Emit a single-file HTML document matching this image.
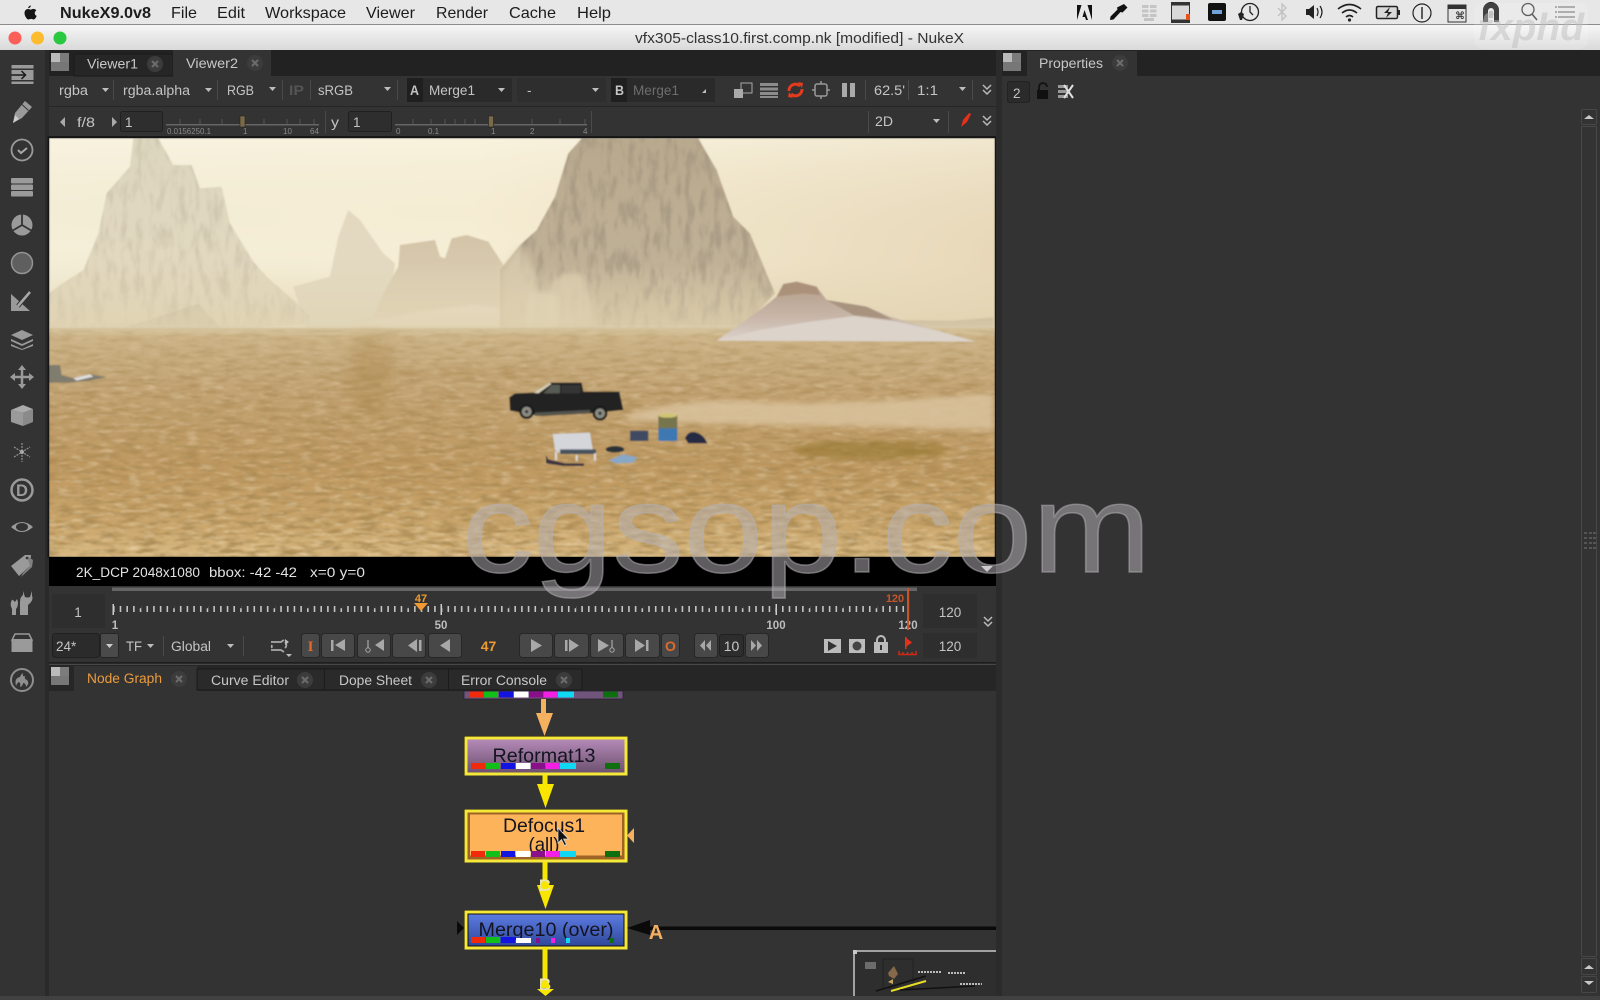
<!DOCTYPE html>
<html><head><meta charset="utf-8"><title>NukeX</title>
<style>
html,body{margin:0;padding:0;background:#333;width:1600px;height:1000px;overflow:hidden}
svg{display:block;position:absolute;left:0;top:0;filter:blur(.35px)}
text{font-family:"Liberation Sans",sans-serif;white-space:pre}
.m{font-size:16px;fill:#1c1c1c}
.u{font-size:13.5px;fill:#c4c4c4}
.d{fill:#6d6d6d}
.s{font-size:8px;fill:#8a8a8a}
.n{font-size:19.5px;fill:#141420;text-anchor:middle}
.tab{font-size:13.5px;fill:#c8c8c8}
.sep{fill:#4a4a4a}
.ic{fill:#9a9a9a}
.icl{fill:none;stroke:#9a9a9a}
.b{fill:#484848;stroke:#272727}
.f{fill:#2e2e2e}
.ar{fill:#bdbdbd}
</style></head><body>
<svg width="1600" height="1000" viewBox="0 0 1600 1000" xmlns="http://www.w3.org/2000/svg">
<defs>
<linearGradient id="sky" x1="0" y1="0" x2="1" y2="0"><stop offset="0" stop-color="#f5efda"/><stop offset=".45" stop-color="#f6eed6"/><stop offset=".75" stop-color="#eee2c6"/><stop offset="1" stop-color="#e7d8b9"/></linearGradient>
<linearGradient id="skyv" x1="0" y1="0" x2="0" y2="1"><stop offset="0" stop-color="#fbf6e6" stop-opacity=".5"/><stop offset=".55" stop-color="#e9dcb9" stop-opacity=".05"/><stop offset="1" stop-color="#e0d2ae" stop-opacity=".3"/></linearGradient>
<linearGradient id="gnd" x1="0" y1="0" x2="0" y2="1"><stop offset="0" stop-color="#cfb88c"/><stop offset=".12" stop-color="#c8ad80"/><stop offset=".3" stop-color="#c2a271"/><stop offset=".6" stop-color="#be9860"/><stop offset=".85" stop-color="#c8a46a"/><stop offset="1" stop-color="#d8b880"/></linearGradient>
<linearGradient id="mt1" x1="0" y1="0" x2="0" y2="1"><stop offset="0" stop-color="#ddd6be"/><stop offset=".6" stop-color="#e1d8bf"/><stop offset="1" stop-color="#e0d4b7"/></linearGradient>
<linearGradient id="mt2" x1="0" y1="0" x2="0" y2="1"><stop offset="0" stop-color="#b8a98e"/><stop offset=".6" stop-color="#bfb096"/><stop offset="1" stop-color="#cdbc9b"/></linearGradient>
<linearGradient id="mesa" x1="0" y1="0" x2="0" y2="1"><stop offset="0" stop-color="#d3c4a8"/><stop offset="1" stop-color="#e2d5b8"/></linearGradient>
<linearGradient id="mound" x1="0" y1="0" x2="0" y2="1"><stop offset="0" stop-color="#b49c88"/><stop offset=".6" stop-color="#c8b6a8"/><stop offset="1" stop-color="#ddd3cb"/></linearGradient>
<linearGradient id="haze" x1="0" y1="0" x2="0" y2="1"><stop offset="0" stop-color="#e2d6b6" stop-opacity="0"/><stop offset="1" stop-color="#e0d2b0" stop-opacity=".75"/></linearGradient>
<linearGradient id="fade" x1="0" y1="0" x2="0" y2="1"><stop offset="0" stop-color="#fff" stop-opacity=".25"/><stop offset=".25" stop-color="#fff" stop-opacity=".65"/><stop offset="1" stop-color="#fff"/></linearGradient>
<mask id="gm"><rect x="49" y="330" width="946" height="227" fill="url(#fade)"/></mask>
<filter id="gr" x="0" y="0" width="1" height="1"><feTurbulence type="fractalNoise" baseFrequency=".05 .24" numOctaves="4" seed="5"/><feColorMatrix values="0 0 0 0 .38  0 0 0 0 .24  0 0 0 0 .08  3 0 0 0 -1.25"/></filter>
<filter id="gl" x="0" y="0" width="1" height="1"><feTurbulence type="fractalNoise" baseFrequency=".07 .3" numOctaves="3" seed="9"/><feColorMatrix values="0 0 0 0 .95  0 0 0 0 .85  0 0 0 0 .65  3 0 0 0 -1.5"/></filter>
<filter id="rk" x="0" y="0" width="1" height="1"><feTurbulence type="fractalNoise" baseFrequency=".14 .04" numOctaves="4" seed="2"/><feColorMatrix values="0 0 0 0 .3  0 0 0 0 .25  0 0 0 0 .18  3 0 0 0 -1.35"/></filter>
<filter id="b1"><feGaussianBlur stdDeviation="1"/></filter>
<filter id="b4"><feGaussianBlur stdDeviation="4"/></filter>
<filter id="b8"><feGaussianBlur stdDeviation="8"/></filter>
<filter id="b12" x="-30%" y="-30%" width="160%" height="160%"><feGaussianBlur stdDeviation="12"/></filter>
<filter id="soft" x="0" y="0" width="1" height="1"><feGaussianBlur stdDeviation=".7"/></filter>
<clipPath id="vc"><rect x="49" y="138" width="946" height="419"/></clipPath>
<clipPath id="m1c"><path id="m1p" transform="translate(40 130) scale(.3333)" d="M27 490L60 465 130 420 175 310 200 190 270 110 280 25 355 25 400 105 455 105 480 175 545 170 570 280 640 395 680 440 760 510 835 580 540 595 220 600 27 590Z"/></clipPath>
<clipPath id="m2c"><path transform="translate(520 130) scale(.3333)" d="M0 345L50 300 105 200 145 70 185 25 535 25 590 120 640 260 690 310 765 490 700 560 640 600 250 600 200 590 0 600Z"/></clipPath>
<linearGradient id="ref" x1="0" y1="0" x2="0" y2="1"><stop offset="0" stop-color="#b78cba"/><stop offset="1" stop-color="#6a4f6e"/></linearGradient>
<linearGradient id="mrg" x1="0" y1="0" x2="0" y2="1"><stop offset="0" stop-color="#5f7fe6"/><stop offset="1" stop-color="#2c4596"/></linearGradient>
<linearGradient id="tb" x1="0" y1="0" x2="0" y2="1"><stop offset="0" stop-color="#f6f6f6"/><stop offset="1" stop-color="#d9d9d9"/></linearGradient>
<g id="panel"><rect width="18" height="18" fill="#555"/><rect width="9" height="9" fill="#bbb"/><rect x="9" width="9" height="9" fill="#7c7c7c"/><rect y="9" width="18" height="9" fill="#777"/></g>
<g id="xc"><circle r="8" fill="#3c3c3c"/><path d="M-3-3L3 3M3-3L-3 3" stroke="#6c6c6c" stroke-width="2"/></g>
<g id="chips"><rect x="0" width="14" height="6" fill="#f22a0c"/><rect x="15" width="14" height="6" fill="#10c018"/><rect x="30" width="14" height="6" fill="#1414e0"/><rect x="45" width="14.500" height="6" fill="#fff"/><rect x="60" width="14" height="6" fill="#8a0f8a"/><rect x="75" width="14" height="6" fill="#f41fe4"/><rect x="89" width="16" height="6" fill="#0fd8f2"/><rect x="134" width="15" height="6" fill="#0d6f0d"/></g>
<g id="chev"><path d="M-4-6L0-2 4-6M-4-1L0 3 4-1" fill="none" stroke="#bbb" stroke-width="1.500"/></g>
</defs>

<!-- base -->
<rect width="1600" height="1000" fill="#333"/>

<!-- menu bar -->
<rect width="1600" height="24" fill="#e7e7e7"/>
<rect y="24" width="1600" height="1" fill="#8c8c8c"/>
<path d="M31 5.500c-.4 1.700-1.500 2.700-2.800 2.700-.1-1.500 1.300-2.600 2.800-2.700zM24.500 13c0-2.500 1.700-4 3.600-4 1 0 1.800.6 2.500.6.700 0 1.600-.7 2.800-.7 1.200 0 2.200.6 2.900 1.600-2.300 1.300-1.900 4.600.4 5.400-.6 1.600-1.800 3.600-3.100 3.600-.9 0-1.300-.6-2.500-.6s-1.700.6-2.600.6c-1.800 0-4-3.700-4-6.500z" fill="#151515"/>
<text x="60" y="18" class="m" font-weight="bold" textLength="91" lengthAdjust="spacingAndGlyphs">NukeX9.0v8</text>
<text x="171" y="18" class="m" textLength="26" lengthAdjust="spacingAndGlyphs">File</text>
<text x="217" y="18" class="m" textLength="28" lengthAdjust="spacingAndGlyphs">Edit</text>
<text x="265" y="18" class="m" textLength="81" lengthAdjust="spacingAndGlyphs">Workspace</text>
<text x="366" y="18" class="m" textLength="49" lengthAdjust="spacingAndGlyphs">Viewer</text>
<text x="436" y="18" class="m" textLength="52" lengthAdjust="spacingAndGlyphs">Render</text>
<text x="509" y="18" class="m" textLength="47" lengthAdjust="spacingAndGlyphs">Cache</text>
<text x="577" y="18" class="m" textLength="34" lengthAdjust="spacingAndGlyphs">Help</text>

<!-- status icons -->
<path d="M1077 5h4.500l-4.500 15zM1092 5h-4.500l4.500 15zM1084.500 10l3.500 10h-2l-1-3h-2.500z" fill="#111"/>
<path d="M1124 4l3.500 3.500-5 5-2-.5-7 7.500-3.500 .5 .5-3.500 7-7-.5-2z" fill="#111"/>
<g fill="#c4c4c4"><rect x="1142" y="5" width="6.500" height="3"/><rect x="1150" y="5" width="6.500" height="3"/><rect x="1142" y="9.500" width="6.500" height="3"/><rect x="1150" y="9.500" width="6.500" height="3"/><rect x="1142" y="14" width="6.500" height="3"/><rect x="1150" y="14" width="6.500" height="3"/><rect x="1144" y="18" width="10" height="3"/></g>
<rect x="1171" y="2" width="19" height="21" fill="#333"/><rect x="1172" y="5.500" width="17" height="14" fill="#d8d8d8"/><rect x="1186" y="14" width="4" height="6" fill="#e8501a"/>
<rect x="1208" y="3" width="18" height="18" rx="2" fill="#111"/><rect x="1212" y="10" width="10" height="4" fill="#6fa3d8"/>
<circle cx="1250" cy="12" r="8.500" fill="none" stroke="#222" stroke-width="1.300"/><path d="M1250 6v6l3 3" fill="none" stroke="#222" stroke-width="1.300"/><path d="M1238 14l3-2 3 2-2 6h-2z" fill="#222"/>
<path d="M1278 8l8 8-4 4V4l4 4-8 8" fill="none" stroke="#c0c0c0" stroke-width="1.300"/>
<path d="M1306 9h3l5-4v14l-5-4h-3z" fill="#222"/><path d="M1317 8q2 4 0 8M1320 6q4 6 0 12" fill="none" stroke="#222" stroke-width="1.200"/>
<path d="M1338 9q11.500-9 23 0M1342 13q7.500-6 15 0M1346 17q3.500-3 7 0" fill="none" stroke="#222" stroke-width="1.600"/><circle cx="1349.500" cy="20" r="1.600" fill="#222"/>
<rect x="1376.500" y="6.500" width="21" height="12" rx="1.500" fill="#d8d8d8" stroke="#222" stroke-width="1.500"/><rect x="1398" y="10" width="2" height="5" fill="#222"/><path d="M1390 7l-6 6h4l-2 5 6-6h-4z" fill="#222"/>
<circle cx="1422" cy="13" r="9" fill="none" stroke="#222" stroke-width="1.200"/><rect x="1421.300" y="7" width="1.400" height="12" fill="#222"/>
<rect x="1448" y="5" width="18" height="17" fill="#e4e4e4" stroke="#333"/><rect x="1448" y="5" width="18" height="4" fill="#333"/><text x="1455" y="19" font-size="10" fill="#111">⌘</text>
<path d="M1483 22V10a8 8 0 0 1 16 0v12h-5V11a3 3 0 0 0-6 0v11z" fill="#222"/><rect x="1489" y="11" width="4" height="7" fill="#bbb"/>
<circle cx="1528" cy="9.500" r="6" fill="none" stroke="#444" stroke-width="1.300"/><path d="M1532 14l5 6" stroke="#444" stroke-width="1.500"/>
<path d="M1555 7h20M1555 12h20M1555 17h20" stroke="#777" stroke-width="1.300" stroke-dasharray="2 1 17"/>

<!-- title bar -->
<rect y="25" width="1600" height="25" fill="url(#tb)"/>
<circle cx="15" cy="38" r="6.500" fill="#fc5f57"/><circle cx="37.500" cy="38" r="6.500" fill="#fdbc2e"/><circle cx="60" cy="38" r="6.500" fill="#28c83f"/>
<text x="635" y="43" font-size="14.500" fill="#333" textLength="329" lengthAdjust="spacingAndGlyphs">vfx305-class10.first.comp.nk [modified] - NukeX</text>

<!-- left toolbar divider -->
<rect x="45" y="50" width="4" height="950" fill="#2a2a2a"/>

<!-- viewer tab bar -->
<rect x="49" y="50" width="947" height="26" fill="#222"/>
<use href="#panel" x="51" y="53"/>
<rect x="74" y="54" width="99" height="22" fill="#262626" stroke="#1a1a1a"/>
<rect x="173" y="50" width="98" height="27" fill="#333"/>
<text x="87" y="68.500" class="tab" textLength="51" lengthAdjust="spacingAndGlyphs">Viewer1</text><use href="#xc" x="155" y="64"/>
<text x="186" y="68" class="tab" textLength="52" lengthAdjust="spacingAndGlyphs">Viewer2</text><use href="#xc" x="255" y="63"/>

<!-- viewer row 1 -->
<rect x="49" y="106" width="947" height="1" fill="#262626"/>
<rect x="407" y="78" width="105" height="24" fill="#2a2a2a"/><rect x="407" y="78" width="16" height="24" fill="#1f1f1f"/>
<rect x="517" y="78" width="89" height="24" fill="#2e2e2e"/>
<rect x="611" y="78" width="104" height="24" fill="#2a2a2a"/><rect x="611" y="78" width="16" height="24" fill="#1f1f1f"/>
<text x="59" y="95" class="u" textLength="29" lengthAdjust="spacingAndGlyphs">rgba</text>
<text x="123" y="95" class="u" textLength="67" lengthAdjust="spacingAndGlyphs">rgba.alpha</text>
<text x="227" y="95" class="u" textLength="27" lengthAdjust="spacingAndGlyphs">RGB</text>
<text x="289" y="95" class="u" style="fill:#555" font-weight="bold" textLength="15" lengthAdjust="spacingAndGlyphs">IP</text>
<text x="318" y="95" class="u" textLength="35" lengthAdjust="spacingAndGlyphs">sRGB</text>
<text x="410" y="95" class="u" font-weight="bold" textLength="9" lengthAdjust="spacingAndGlyphs">A</text>
<text x="429" y="95" class="u" textLength="46" lengthAdjust="spacingAndGlyphs">Merge1</text>
<text x="527" y="95" class="u">-</text>
<text x="615" y="95" class="u" font-weight="bold" textLength="9" lengthAdjust="spacingAndGlyphs">B</text>
<text x="633" y="95" class="u d" style="fill:#6d6d6d" textLength="46" lengthAdjust="spacingAndGlyphs">Merge1</text>
<g class="ar"><path d="M102 88h7l-3.500 4zM205 88h7l-3.500 4zM269 87h7l-3.500 4zM384 87h7l-3.500 4zM498 88h7l-3.500 4zM592 88h7l-3.500 4zM702 93l4-4v4zM959 87h7l-3.500 4zM933 119h7l-3.500 4z"/></g>
<g class="sep"><rect x="113" y="80" width="1" height="20"/><rect x="217" y="80" width="1" height="20"/><rect x="282" y="80" width="1" height="20"/><rect x="310" y="80" width="1" height="20"/><rect x="397" y="80" width="1" height="20"/><rect x="865" y="80" width="1" height="20"/><rect x="908" y="80" width="1" height="20"/><rect x="972" y="80" width="1" height="20"/></g>
<!-- row1 icons -->
<rect x="741" y="83" width="11" height="10" fill="#333" stroke="#aaa"/><rect x="734" y="89" width="9" height="9" fill="#aaa"/>
<rect x="760" y="83" width="18" height="3" fill="#8c8c8c"/><rect x="760" y="87.500" width="18" height="3" fill="#8c8c8c"/><rect x="760" y="92" width="18" height="3" fill="#8c8c8c"/><rect x="760" y="96" width="18" height="2" fill="#8c8c8c"/>
<path d="M789 91a6.500 6.500 0 0 1 11-5M802 89a6.500 6.500 0 0 1-11 5" fill="none" stroke="#e63a1e" stroke-width="3"/><path d="M798 82l5 1-1 5zM793 98l-5-1 1-5z" fill="#e63a1e"/>
<rect x="815" y="84" width="12" height="12" rx="2" fill="none" stroke="#999" stroke-width="1.500"/><path d="M821 81v3M821 96v3M812 90h3M827 90h3" stroke="#999" stroke-width="1.500"/>
<rect x="842" y="83" width="5" height="14" fill="#aaa"/><rect x="850" y="83" width="5" height="14" fill="#aaa"/>
<text x="874" y="95" class="u" textLength="31" lengthAdjust="spacingAndGlyphs">62.5'</text>
<text x="917" y="95" class="u" textLength="21" lengthAdjust="spacingAndGlyphs">1:1</text>
<use href="#chev" x="987" y="91"/>

<!-- viewer row 2 -->
<rect x="49" y="136" width="947" height="2" fill="#1a1a1a"/>
<path d="M65 117v10l-5-5zM112 117v10l5-5z" fill="#aaa"/>
<text x="77" y="127" class="u" textLength="18" lengthAdjust="spacingAndGlyphs">f/8</text>
<rect x="120.500" y="111.500" width="42" height="20" rx="2" fill="#2e2e2e" stroke="#202020"/><text x="125" y="127" class="u">1</text>
<rect x="166" y="124" width="153" height="1.500" fill="#666"/>
<path d="M180 119v5M200 119v5M222 119v5M264 119v5M287 119v5M300 119v5M314 119v5" stroke="#555"/>
<rect x="240" y="116" width="5" height="11" fill="#7b6a48" stroke="#222" stroke-width=".6"/>
<text x="167" y="134" class="s" textLength="44" lengthAdjust="spacingAndGlyphs">0.0156250.1</text><text x="243" y="134" class="s">1</text><text x="283" y="134" class="s">10</text><text x="310" y="134" class="s">64</text>
<rect x="325" y="111" width="1" height="22" class="sep"/>
<text x="331" y="127" class="u" textLength="8" lengthAdjust="spacingAndGlyphs">y</text>
<rect x="348.500" y="111.500" width="43" height="20" rx="2" fill="#2e2e2e" stroke="#202020"/><text x="353" y="127" class="u">1</text>
<rect x="395" y="124" width="192" height="1.500" fill="#666"/>
<path d="M413 119v5M431 119v5M445 119v5M455 119v5M465 119v5M475 119v5M532 119v5M560 119v5M585 119v5" stroke="#555"/>
<rect x="488.500" y="116" width="5" height="11" fill="#7b6a48" stroke="#222" stroke-width=".6"/>
<text x="396" y="134" class="s">0</text><text x="428" y="134" class="s">0.1</text><text x="491" y="134" class="s">1</text><text x="530" y="134" class="s">2</text><text x="583" y="134" class="s">4</text>
<rect x="591" y="111" width="1" height="22" class="sep"/>
<rect x="868" y="111" width="1" height="22" class="sep"/><rect x="948" y="111" width="1" height="22" class="sep"/>
<text x="875" y="126" class="u" textLength="18" lengthAdjust="spacingAndGlyphs">2D</text>
<path d="M961 127l2-7 6-7 2 1-4 8z" fill="#e6301a"/>
<use href="#chev" x="987" y="122"/>

<!-- LANDSCAPE -->
<rect x="47.500" y="136.500" width="949" height="421" fill="#161616"/>
<g clip-path="url(#vc)"><g filter="url(#soft)">
<rect x="49" y="138" width="946" height="195" fill="url(#sky)"/>
<rect x="49" y="138" width="946" height="195" fill="url(#skyv)"/>
<g transform="translate(40 130) scale(.3333)">
<path d="M27 490L60 465 130 420 175 310 200 190 270 110 280 25 355 25 400 105 455 105 480 175 545 170 570 280 640 395 680 440 760 510 835 580 540 600 220 610 27 600Z" fill="url(#mt1)"/>
<path d="M760 470L870 440 895 320 925 240 960 270 1030 370 1065 400 1050 500 1040 600 800 600Z" fill="#e2d9c0"/>
<path d="M1030 490L1075 410 1080 345 1185 330 1200 380 1215 385 1235 325 1280 315 1345 335 1400 420 1440 470 1500 500 1500 610 850 610 1000 560Z" fill="url(#mesa)"/>
<path d="M1415 430L1440 350 1500 320 1500 500 1440 470Z" fill="#dcd0b4"/>
<path d="M850 605L1000 570 1070 560 1140 545 1300 525 1440 540 1500 570 1500 612 850 612Z" fill="#e6dbc2" filter="url(#b4)"/>
<path d="M230 600L340 565 450 530 475 520 510 560 550 600Z" fill="#d0c5a9"/>
</g>
<g clip-path="url(#m1c)"><rect x="49" y="138" width="260" height="200" filter="url(#rk)" opacity=".2"/></g>
<!-- main mountain -->
<g transform="translate(520 130) scale(.3333)">
<path d="M-60 420L0 345 50 300 105 200 145 70 185 25 535 25 590 120 640 260 690 310 765 490 700 560 640 600 250 605 0 605-60 600Z" fill="url(#mt2)"/>
</g>
<g clip-path="url(#m2c)"><rect x="500" y="138" width="300" height="210" filter="url(#rk)" opacity=".5"/></g>
<g transform="translate(520 130) scale(.3333)">
<path d="M-60 420L0 345 40 420 60 500 30 600-60 600Z" fill="#e2d5b6" opacity=".6" filter="url(#b12)"/>
<path d="M90 460Q120 425 175 430 205 445 215 510L225 590 60 595Z" fill="#d9cbac" opacity=".8" filter="url(#b8)"/>
<path d="M20 500Q60 475 110 495L120 590 10 595Z" fill="#e0d3b6" opacity=".8" filter="url(#b8)"/>
<path d="M-10 600L30 595 230 590 255 612-10 614Z" fill="#a89a7e" opacity=".6" filter="url(#b1)"/>
<path d="M1130 570L1300 572 1420 562 1420 600 1200 600Z" fill="#baac90"/>
</g>
<rect x="49" y="265" width="946" height="70" fill="url(#haze)"/>
<!-- ground -->
<rect x="49" y="328" width="946" height="229" fill="url(#gnd)"/>
<rect x="49" y="326" width="946" height="8" fill="#dccfae" opacity=".6" filter="url(#b4)"/>
<g mask="url(#gm)"><rect x="49" y="330" width="946" height="227" filter="url(#gr)" opacity=".85"/><rect x="49" y="330" width="946" height="227" filter="url(#gl)" opacity=".4"/></g>
<ellipse cx="370" cy="375" rx="22" ry="42" fill="#a98447" opacity=".35" filter="url(#b8)"/>
<ellipse cx="450" cy="373" rx="120" ry="5" fill="#a98447" opacity=".2" filter="url(#b4)"/>
<!-- white mound -->
<g transform="translate(520 130) scale(.3333)">
<path d="M590 632L650 590 720 540 770 500 790 462 830 455 890 470 920 510 1040 530 1110 560 1210 590 1365 634Z" fill="url(#mound)"/>
<path d="M590 632L720 600 850 578 1000 558 1130 575 1250 602 1365 635Z" fill="#dcd3cb"/>
<path d="M770 500L790 462 830 455 890 470 900 495 850 490Z" fill="#ab917a"/>
<path d="M920 510L1040 530 1120 570 1000 555Z" fill="#a8937f"/>
<!-- dust -->
<path d="M320 855Q500 800 700 815T1420 790L1420 900 1200 893 600 882 320 872Z" fill="#dac39e" opacity=".85" filter="url(#b8)"/>
<ellipse cx="1050" cy="960" rx="235" ry="28" fill="#92742a" opacity=".55" filter="url(#b8)"/>
</g>
<!-- left object -->
<g transform="translate(40 130) scale(.3333)">
<path d="M27 705H60L65 735 100 745 150 733 200 742 150 752 80 758 27 758Z" fill="#807c6e"/><path d="M100 745L150 733 160 740 110 752Z" fill="#dedede"/>
</g>
<!-- truck & props -->
<g transform="translate(480 360) scale(.3333)">
<path d="M88 112L105 100 160 98 210 68 305 68 310 95 418 95 430 150 330 160 180 168 90 152Z" fill="#232322"/>
<path d="M190 100L215 75 240 75 240 100Z" fill="#565b52"/><rect x="245" y="75" width="56" height="25" fill="#363634"/>
<path d="M160 98L210 68 214 72 175 100Z" fill="#d8d0b8"/>
<path d="M165 158L330 150 330 160 165 168Z" fill="#55554f"/>
<circle cx="140" cy="155" r="22" fill="#161616"/><circle cx="140" cy="155" r="15" fill="#8c8c84"/><circle cx="140" cy="155" r="5" fill="#333"/>
<circle cx="360" cy="160" r="22" fill="#161616"/><circle cx="360" cy="160" r="15" fill="#8c8c84"/><circle cx="360" cy="160" r="5" fill="#333"/>
<rect x="450" y="212" width="55" height="31" fill="#404a62"/>
<rect x="535" y="165" width="57" height="42" fill="#76744e"/><rect x="535" y="205" width="57" height="38" fill="#3d78b2"/><ellipse cx="563" cy="167" rx="28" ry="6" fill="#cfc570"/>
<path d="M615 235Q625 210 650 218 672 225 682 250H625Z" fill="#252b42"/>
<path d="M218 222L330 218 338 268 350 280 240 280 225 270Z" fill="#d4d6da"/><path d="M240 268L348 268 348 282 240 282Z" fill="#46525f"/>
<path d="M228 275v25M290 285v18M345 280v22" stroke="#ddd" stroke-width="6"/>
<path d="M198 285v25L250 318H312V310H255L205 298Z" fill="#3a3340"/>
<ellipse cx="405" cy="268" rx="28" ry="10" fill="#2a3038"/>
<path d="M385 302L430 283 472 292 460 308 410 310Z" fill="#88a8c8"/>
</g>
</g></g>

<!-- info bar -->
<rect x="49" y="557" width="947" height="29" fill="#000"/>
<text x="76" y="577" font-size="13.500" fill="#e2e2e2" textLength="124" lengthAdjust="spacingAndGlyphs">2K_DCP 2048x1080</text>
<text x="209" y="577" font-size="13.500" fill="#e2e2e2" textLength="88" lengthAdjust="spacingAndGlyphs">bbox: -42 -42</text>
<text x="310" y="577" font-size="13.500" fill="#e2e2e2" textLength="55" lengthAdjust="spacingAndGlyphs">x=0 y=0</text>
<path d="M981 566h12l-6 6z" fill="#e8e8e8"/>

<!-- timeline -->
<rect x="49" y="586" width="947" height="77" fill="#333"/>
<rect x="112" y="587.500" width="805" height="3.500" fill="#666"/>
<rect x="52" y="594" width="53" height="34" class="f"/>
<text x="78" y="617" font-size="13.500" fill="#c4c4c4" text-anchor="middle">1</text>
<line x1="113" y1="609" x2="909" y2="609" stroke="#c4c4c4" stroke-width="6" stroke-dasharray="1.600 5.090"/>
<line x1="113" y1="607" x2="909" y2="607" stroke="#333" stroke-width="2.500" stroke-dasharray="1.800 31.650" stroke-dashoffset="-26.5"/>
<rect x="112.500" y="604" width="1.500" height="11" fill="#ccc"/><rect x="440.500" y="604" width="1.500" height="11" fill="#ccc"/><rect x="775.500" y="604" width="1.500" height="11" fill="#ccc"/>
<text x="115" y="629" font-size="11.500" font-weight="bold" fill="#bdbdbd" text-anchor="middle">1</text>
<text x="441" y="629" font-size="11.500" font-weight="bold" fill="#bdbdbd" text-anchor="middle">50</text>
<text x="776" y="629" font-size="11.500" font-weight="bold" fill="#bdbdbd" text-anchor="middle">100</text>
<text x="908" y="629" font-size="11.500" font-weight="bold" fill="#bdbdbd" text-anchor="middle">120</text>
<text x="421" y="602" font-size="11" font-weight="bold" fill="#ef9a32" text-anchor="middle">47</text>
<path d="M414 603h14l-7 8z" fill="#ef9a32"/>
<text x="895" y="602" font-size="11" font-weight="bold" fill="#c8552a" text-anchor="middle">120</text>
<rect x="907" y="588" width="2.200" height="42" fill="#c8552a"/>
<rect x="923" y="594" width="54" height="34" class="f"/>
<text x="950" y="617" font-size="13.500" fill="#c4c4c4" text-anchor="middle">120</text>
<use href="#chev" x="988" y="623"/>

<!-- transport -->
<rect x="52.500" y="633.500" width="47" height="24" rx="3" fill="#2b2b2b" stroke="#202020"/>
<rect x="100.500" y="633.500" width="18" height="24" rx="2" fill="#4a4a4a" stroke="#252525"/>
<text x="56" y="651" font-size="13.500" fill="#c4c4c4">24*</text><path d="M106 644h7l-3.500 4z" fill="#ccc"/>
<text x="126" y="651" class="u" textLength="16" lengthAdjust="spacingAndGlyphs">TF</text><path d="M147 644h7l-3.500 4z" class="ar"/>
<rect x="163" y="636" width="1" height="20" class="sep"/>
<text x="171" y="651" class="u" textLength="40" lengthAdjust="spacingAndGlyphs">Global</text><path d="M227 644h7l-3.500 4z" class="ar"/>
<rect x="243" y="636" width="1" height="20" class="sep"/>
<path d="M271 642h10l3-2M271 650h10l3 2M272 645a4 4 0 0 0 0 3M285 642a4 4 0 0 1 0 6" fill="none" stroke="#a8a8a8" stroke-width="1.800"/><path d="M285 639l4 3-4 3zM286 654h6l-3 3z" fill="#bbb"/>
<g class="b">
<rect x="301.500" y="633.500" width="18" height="24" rx="3"/><rect x="321.500" y="633.500" width="33" height="24" rx="3"/><rect x="357.500" y="633.500" width="33" height="24" rx="3"/><rect x="392.500" y="633.500" width="33" height="24" rx="3"/><rect x="428.500" y="633.500" width="33" height="24" rx="3"/>
<rect x="519.500" y="633.500" width="33" height="24" rx="3"/><rect x="554.500" y="633.500" width="34" height="24" rx="3"/><rect x="590.500" y="633.500" width="33" height="24" rx="3"/><rect x="625.500" y="633.500" width="34" height="24" rx="3"/><rect x="661.500" y="633.500" width="18" height="24" rx="3"/>
<rect x="694.500" y="633.500" width="23" height="24" rx="3"/><rect x="745.500" y="633.500" width="23" height="24" rx="3"/>
</g>
<rect x="719.500" y="634.500" width="24" height="22" rx="3" fill="#2d2d2d" stroke="#202020"/>
<text x="310.500" y="651" font-size="15" font-weight="bold" fill="#e06a2a" text-anchor="middle" style="font-family:'Liberation Serif',serif">I</text>
<text x="670.500" y="651" font-size="14" font-weight="bold" fill="#e06a2a" text-anchor="middle">O</text>
<text x="488.500" y="651" font-size="14" font-weight="bold" fill="#ef9a32" text-anchor="middle">47</text>
<text x="731.500" y="651" font-size="14" fill="#c8c8c8" text-anchor="middle">10</text>
<g fill="#a8a8a8">
<rect x="331" y="640" width="2.500" height="11"/><path d="M345 639v12l-10-6z"/>
<path d="M384 639v12l-9-6z"/><circle cx="368" cy="650" r="2.200" fill="none" stroke="#a8a8a8"/><rect x="367.400" y="640" width="1.200" height="8"/>
<path d="M417 639v13l-9-6.500z"/><rect x="419" y="640" width="2.500" height="11"/>
<path d="M450 639v13l-10-6.500z"/>
<path d="M531 639v13l11-6.500z"/>
<rect x="565" y="640" width="2.500" height="11"/><path d="M569 639v13l10-6.500z"/>
<path d="M598 639v13l11-6.500z"/><circle cx="612" cy="650" r="2.200" fill="none" stroke="#a8a8a8"/><rect x="611.400" y="640" width="1.200" height="8"/>
<path d="M635 639v13l10-6.500z"/><rect x="646" y="640" width="2.500" height="11"/>
<path d="M705 640v11l-5-5.500zM711 640v11l-5-5.500z"/>
<path d="M751 640v11l5-5.500zM757 640v11l5-5.500z"/>
</g>
<rect x="824" y="639" width="17" height="14" fill="#bcbcbc"/><path d="M828 641v10l9-5z" fill="#333"/>
<rect x="849" y="639" width="16" height="14" fill="#bcbcbc"/><circle cx="857" cy="646" r="4.500" fill="#444"/>
<path d="M877 642v-2a4 4 0 0 1 8 0v2" fill="none" stroke="#bcbcbc" stroke-width="2"/><rect x="874" y="642" width="14" height="11" fill="#bcbcbc"/><rect x="880" y="645" width="2" height="5" fill="#333"/>
<path d="M905 637l7 5.500-7 5z" fill="#e6301a"/><path d="M899 651v3.500h17v-3.500M903 652v2M907.500 652v2M912 652v2" fill="none" stroke="#d02a16" stroke-width="1.500"/><rect x="905" y="637" width="1.500" height="12" fill="#e6301a"/>
<rect x="923" y="633" width="54" height="25" class="f"/>
<text x="950" y="651" font-size="13.500" fill="#c4c4c4" text-anchor="middle">120</text>

<!-- Node graph tab bar -->
<rect x="49" y="662" width="947" height="1.500" fill="#1e1e1e"/><rect x="49" y="664" width="947" height="1" fill="#484848"/>
<rect x="49" y="665" width="947" height="26" fill="#262626"/>
<use href="#panel" x="51" y="667"/>
<rect x="74" y="666" width="123" height="26" fill="#333"/>
<rect x="197" y="669" width="385" height="21" fill="#2a2a2a" stroke="#1b1b1b"/>
<rect x="324" y="669" width="1" height="21" fill="#1b1b1b"/><rect x="448" y="669" width="1" height="21" fill="#1b1b1b"/>
<text x="87" y="683" font-size="13.500" fill="#ec9c3e" textLength="75" lengthAdjust="spacingAndGlyphs">Node Graph</text><use href="#xc" x="179" y="679"/>
<text x="211" y="685" class="tab" textLength="78" lengthAdjust="spacingAndGlyphs">Curve Editor</text><use href="#xc" x="305" y="680"/>
<text x="339" y="685" class="tab" textLength="73" lengthAdjust="spacingAndGlyphs">Dope Sheet</text><use href="#xc" x="429" y="680"/>
<text x="461" y="685" class="tab" textLength="86" lengthAdjust="spacingAndGlyphs">Error Console</text><use href="#xc" x="564" y="680"/>

<!-- Node graph -->
<rect x="49" y="691" width="947" height="305" fill="#333"/>
<rect x="464" y="691" width="159" height="8" fill="#70557a" stroke="#2a2030" stroke-width=".8"/>
<use href="#chips" x="469" y="691.500"/>
<rect x="541" y="699" width="5" height="16" fill="#f5b060"/><path d="M536 713h17l-8.500 23z" fill="#f5b060"/>

<rect x="464" y="736" width="163.500" height="39.500" fill="#111"/>
<rect x="466" y="738" width="160" height="36" fill="url(#ref)" stroke="#f6e838" stroke-width="3"/>
<text x="544" y="762" class="n" textLength="103" lengthAdjust="spacingAndGlyphs">Reformat13</text>
<use href="#chips" x="471" y="763"/>
<rect x="542.500" y="775" width="5" height="10" fill="#f8e600"/><path d="M537 784h17l-8.500 24z" fill="#f8e600"/>

<rect x="464" y="809" width="163.500" height="53" fill="#111"/>
<rect x="466" y="811" width="160" height="50" fill="#9e6326" stroke="#f6e838" stroke-width="3"/>
<rect x="470" y="814.500" width="152" height="41" fill="#fdb35a"/>
<text x="544" y="832" class="n" textLength="82" lengthAdjust="spacingAndGlyphs">Defocus1</text>
<text x="544" y="851" class="n" textLength="31" lengthAdjust="spacingAndGlyphs">(all)</text>
<use href="#chips" x="471" y="851"/>
<path d="M634 828v15l-7-7.500z" fill="#f5b060"/>
<path d="M558 828v15l3.500-3.500 3 6 2-1-3-5.500h5z" fill="#111" stroke="#ddd" stroke-width=".7"/>
<rect x="542.500" y="862" width="5" height="24" fill="#f8e600"/><path d="M537 885h17l-8.500 24z" fill="#f8e600"/>
<text x="545" y="891" font-size="17" font-weight="bold" fill="#e8e4b0" text-anchor="middle">B</text>
<rect x="541" y="883" width="8" height="5" fill="#f8e600"/>

<rect x="464" y="910" width="163.500" height="38.500" fill="#111"/>
<rect x="466" y="912" width="160" height="36" fill="url(#mrg)" stroke="#f6e838" stroke-width="3"/>
<rect x="468" y="914" width="156" height="32" fill="none" stroke="#111"/>
<text x="546" y="936" class="n" textLength="135" lengthAdjust="spacingAndGlyphs">Merge10 (over)</text>
<g><rect x="471" y="937" width="14" height="6" fill="#f22a0c"/><rect x="486" y="937" width="14" height="6" fill="#10c018"/><rect x="501" y="937" width="14" height="6" fill="#1414e0"/><rect x="516" y="938" width="15" height="5" fill="#fff"/><rect x="536" y="938" width="4" height="5" fill="#8a0f8a"/><rect x="551" y="938" width="4" height="5" fill="#f41fe4"/><rect x="566" y="938" width="4" height="5" fill="#0fd8f2"/><rect x="610" y="938" width="4" height="5" fill="#0d6f0d"/></g>
<path d="M457 921l7 7-7 7z" fill="#0a0a0a"/>
<path d="M627 928l23-8v15z" fill="#0a0a0a"/><rect x="645" y="926.500" width="351" height="3.500" fill="#0a0a0a"/>
<text x="656" y="939" font-size="20" font-weight="bold" fill="#f5b060" text-anchor="middle">A</text>
<rect x="542.500" y="948" width="5" height="40" fill="#f8e600"/>
<path d="M537 989h17l-8.500 7z" fill="#f8e600"/>
<text x="545" y="990" font-size="17" font-weight="bold" fill="#e8e4b0" text-anchor="middle">B</text>
<rect x="541" y="983" width="8" height="5" fill="#f8e600"/>

<!-- minimap -->
<rect x="854" y="951" width="143" height="45" fill="#2e2e2e"/>
<path d="M854 996V951H997" fill="none" stroke="#c8c8c8" stroke-width="1.500"/>
<rect x="853" y="950" width="4" height="4" fill="#c8c8c8"/>
<rect x="865" y="962" width="11" height="7" fill="#888" opacity=".7"/>
<rect x="883" y="959" width="30" height="29" fill="none" stroke="#222"/>
<path d="M888 973l6-7 4 8-4 5-5-3z" fill="#85694a"/><path d="M888 982l5-3v5z" fill="#c9a860"/>
<path d="M891 991l35-10" stroke="#e6dc28" stroke-width="2"/><path d="M876 991l50-15M900 990l75-4" stroke="#111" stroke-width="1.500"/>
<path d="M918 972h24M948 973h17M960 984h22" stroke="#bbb" stroke-width="2" stroke-dasharray="2 1"/>

<!-- divider between panes -->
<rect x="996" y="50" width="6" height="950" fill="#2b2b2b"/>

<!-- properties -->
<rect x="1002" y="50" width="598" height="26" fill="#232323"/>
<use href="#panel" x="1003" y="53"/>
<rect x="1027" y="51" width="110" height="26" fill="#333"/>
<text x="1039" y="68" class="tab" textLength="64" lengthAdjust="spacingAndGlyphs">Properties</text><use href="#xc" x="1120" y="63"/>
<rect x="1007.500" y="81.500" width="22" height="21" rx="2" fill="#2b2b2b" stroke="#222"/>
<text x="1013" y="98" class="u">2</text>
<path d="M1039 90v-3a4 4 0 0 1 8 0" fill="none" stroke="#111" stroke-width="1.800"/><rect x="1037" y="90" width="11" height="9" fill="#111"/>
<rect x="1058" y="85" width="10" height="3" fill="#999"/><rect x="1058" y="90" width="10" height="3" fill="#999"/><rect x="1058" y="95" width="10" height="3" fill="#999"/>
<path d="M1064 85l9 13M1073 85l-9 13" stroke="#e0e0e0" stroke-width="2"/>

<!-- scrollbar -->
<g fill="#333" stroke="#474747">
<rect x="1581.500" y="109.500" width="15" height="15" rx="1"/>
<rect x="1581.500" y="126.500" width="15" height="830" rx="1"/>
<rect x="1581.500" y="958.500" width="15" height="16" rx="1"/>
<rect x="1581.500" y="976.500" width="15" height="16" rx="1"/>
</g>
<path d="M1584 119l5-4 5 4zM1584 969l5-4 5 4zM1584 981l5 4 5-4z" fill="#c8c8c8"/>
<g fill="#555"><rect x="1584" y="532" width="3" height="2"/><rect x="1589" y="532" width="3" height="2"/><rect x="1593" y="532" width="3" height="2"/><rect x="1584" y="537" width="3" height="2"/><rect x="1589" y="537" width="3" height="2"/><rect x="1593" y="537" width="3" height="2"/><rect x="1584" y="542" width="3" height="2"/><rect x="1589" y="542" width="3" height="2"/><rect x="1593" y="542" width="3" height="2"/><rect x="1584" y="547" width="3" height="2"/><rect x="1589" y="547" width="3" height="2"/><rect x="1593" y="547" width="3" height="2"/></g>
<rect y="996" width="1600" height="4" fill="#414141"/>

<!-- left toolbar icons -->
<g transform="translate(22.500 74)"><rect x="-11" y="-9" width="22" height="3.500" class="ic"/><rect x="-11" y="-4" width="22" height="10" class="ic"/><rect x="-11" y="7.500" width="22" height="2.500" class="ic"/><path d="M-11 1H3M-1-3L3 1-1 5" fill="none" stroke="#1a1a1a" stroke-width="1.500"/></g>
<g transform="translate(22 111)"><path d="M-9 12L-7 2 3-10 10-4 0 7z" class="ic"/><path d="M-9 12L-7 4-3 8z" fill="#ccc"/><path d="M0-6.500L6.500-.5" stroke="#333"/></g>
<g transform="translate(22 150)"><circle r="10.500" fill="none" stroke="#9a9a9a" stroke-width="1.800"/><path d="M-4 0L-1 3 5-2" fill="none" stroke="#a8a8a8" stroke-width="2"/></g>
<g transform="translate(22 187)" class="ic"><rect x="-11" y="-9" width="22" height="5.500" rx="1"/><rect x="-11" y="-2.500" width="22" height="5.500" rx="1"/><rect x="-11" y="4" width="22" height="5.500" rx="1"/></g>
<g transform="translate(22 225)"><circle r="10.500" class="ic"/><path d="M0 0V-11M0 0L-10 6M0 0L10 6" stroke="#333" stroke-width="1.800"/></g>
<g transform="translate(22 263)"><circle r="10.500" fill="#5f5f5f" stroke="#949494" stroke-width="1.500"/></g>
<g transform="translate(22 302)"><path d="M-11 9V-8L8 9z" class="ic"/><path d="M-4 4L7-9" stroke="#333" stroke-width="4.500"/><path d="M-4 4L8-10" stroke="#a8a8a8" stroke-width="2.500"/></g>
<g transform="translate(22 338)" class="ic"><path d="M0-8L11-3 0 2-11-3z"/><path d="M-11 1L0 6 11 1 11 3 0 8-11 3z"/><path d="M-11 6L0 11 11 6 11 8 0 12-11 8z"/></g>
<g transform="translate(22 377)"><path d="M-10 0H10M0-9V10" stroke="#9a9a9a" stroke-width="2.500"/><path d="M0-12L4-7H-4zM0 12L4 7H-4zM-12 0L-7-4V4zM12 0L7-4V4z" class="ic"/></g>
<g transform="translate(22 415)"><path d="M-11-5L1-10 11-6 1-2z" fill="#aaa"/><path d="M-11-5L1-2V11L-11 7z" fill="#9a9a9a"/><path d="M1-2L11-6V7L1 11z" fill="#8a8a8a"/></g>
<g transform="translate(22 452)"><path d="M-8-5L8 5M-8 5L8-5M0-9V10" stroke="#8a8a8a" stroke-width="1.300" stroke-dasharray="2 1"/><circle r="2" fill="#aaa"/></g>
<g transform="translate(22 490)"><circle r="10.500" fill="none" stroke="#9a9a9a" stroke-width="2.500"/><text y="6" font-size="16.500" font-weight="bold" fill="#9a9a9a" text-anchor="middle">D</text></g>
<g transform="translate(22 527)"><path d="M-11 0Q0-10 11 0 0 10-11 0z" class="ic"/><ellipse rx="6" ry="4" fill="#333"/></g>
<g transform="translate(22 565)"><path d="M-11 1L3-10 9-10 8 1-3 11z" class="ic"/><path d="M5-9L11-5 10 2-1 12 1 8 8 1z" fill="#808080"/><circle cx="5" cy="-7" r="1.300" fill="#333"/></g>
<g transform="translate(22 603)" class="ic"><path d="M-2 12V-1Q-2-6 1-8V-12L3-6Q6-5 8-6L10-12 10-7Q12-3 6 2V12z"/><path d="M-11-1Q-10-4-9-3L-7-1-5-4-4-1Q-4 4-6 6V12H-10V6Q-12 2-11-1z"/></g>
<g transform="translate(22 643)" class="ic"><path d="M-7-9H7L10-3H-10z" fill="none" stroke="#9a9a9a" stroke-width="1.500"/><rect x="-10.500" y="-4" width="21" height="13"/></g>
<g transform="translate(22 680)"><circle r="11" fill="none" stroke="#8e8e8e" stroke-width="2"/><path d="M-6 6Q-8-2-2-3-1-6 1-7 0-3 3-4 2-1 5 0 8 3 4 7 4 3 1 3 1 6-2 7-1 3-3 2-5 3-6 6z" fill="#8e8e8e"/></g>

<!-- watermarks -->
<text x="462" y="572" font-size="126" fill="#b4b0b4" fill-opacity=".52" stroke="#b4b0b4" stroke-opacity=".52" stroke-width="1.500" textLength="689" lengthAdjust="spacingAndGlyphs">cgsop.com</text>
<rect x="1474" y="3" width="114" height="46" rx="9" fill="#fff" fill-opacity=".14"/>
<text x="1478" y="40" font-size="38" font-weight="bold" font-style="italic" fill="#bdbdbd" fill-opacity=".5" textLength="106" lengthAdjust="spacingAndGlyphs">fxphd</text>
</svg>
</body></html>
